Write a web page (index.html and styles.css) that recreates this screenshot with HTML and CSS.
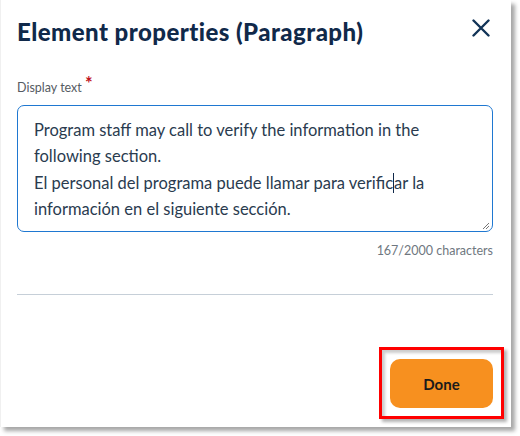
FILE: index.html
```html
<!DOCTYPE html>
<html>
<head>
<meta charset="utf-8">
<link rel="stylesheet" href="styles.css">
</head>
<body>
<div class="panel">
  <header class="head">
    <h1 class="title">Element properties (Paragraph)</h1>
    <button class="close" aria-label="Close">
      <svg width="18" height="18" viewBox="0 0 18 18"><path d="M1.5 1.5L16.5 16.5M16.5 1.5L1.5 16.5" stroke="#123457" stroke-width="2.4" stroke-linecap="round"/></svg>
    </button>
  </header>
  <div class="field">
    <label class="label">Display text <span class="req">*</span></label>
    <div class="box">Program staff may call to verify the information in the following section.<br>El personal del programa puede llamar para verific<span class="caret">ar la</span><br>información en el siguiente sección.<span class="grip"><svg width="9" height="9" viewBox="0 0 9 9"><path d="M8 2L2 8M8 5L5 8" stroke="#777" stroke-width="1"/></svg></span></div>
    <div class="count">167/2000 characters</div>
  </div>
  <hr class="divider">
  <div class="foot">
    <button class="done">Done</button>
    <div class="mark"></div>
  </div>
</div>
</body>
</html>
```

FILE: styles.css
```css
* { box-sizing: border-box; }
body { margin: 0; background: #fff; width: 520px; height: 436px; overflow: hidden; }
.panel {
  width: 511px; height: 427px; background: #fff;
  border-left: 1px solid #f0f0f0;
  box-shadow: 4px 4px 4px rgba(0,0,0,0.35);
  padding: 0 18px 0 16px;
  display: flex; flex-direction: column;
}
.head { display: flex; justify-content: space-between; align-items: center; height: 59px; }
.title { margin: 0; font-family: "Lato", sans-serif; font-weight: 900; font-size: 24px; color: #10294a; letter-spacing: 0.45px; margin-top: 3px; }
.close { border: 0; background: none; padding: 0; width: 18px; height: 18px; margin-right: 3px; margin-top: -4px; }
.field { margin-top: 21px; }
.label { display: block; font-family: "Lato", sans-serif; font-size: 12.5px; color: #555b62; height: 20px; }
.req { color: #c0121c; font-size: 18px; font-weight: 700; vertical-align: 2px; line-height: 0; }
.box {
  position: relative;
  margin-top: 5px;
  height: 127px; border: 1px solid #1f78d1; border-radius: 7px;
  padding: 11px 16px;
  font-family: "Lato", sans-serif; font-size: 16.5px; line-height: 26.3px; color: #2a3b4f;
}
.caret { border-left: 1px solid #10294a; }
.grip { position: absolute; right: 2px; bottom: 1px; line-height: 0; }
.count { text-align: right; font-family: "Lato", sans-serif; font-size: 12.5px; color: #6f7780; margin-top: 11px; }
.divider { border: 0; border-top: 1px solid #c6cfd8; margin: 36px 0 0; }
.foot { position: relative; display: flex; justify-content: flex-end; margin-top: 64px; }
.done {
  width: 103px; height: 49px; border: 0; border-radius: 10px; background: #f7901f;
  font-family: "Lato", sans-serif; font-weight: 700; font-size: 15px; color: #1b1b1b;
}
.mark {
  position: absolute; right: -11px; top: -12px; width: 125px; height: 72px;
  border: 3px solid #f00; box-shadow: 3px 3px 3px rgba(0,0,0,0.3), inset 3px 3px 3px rgba(0,0,0,0.2);
}
```
